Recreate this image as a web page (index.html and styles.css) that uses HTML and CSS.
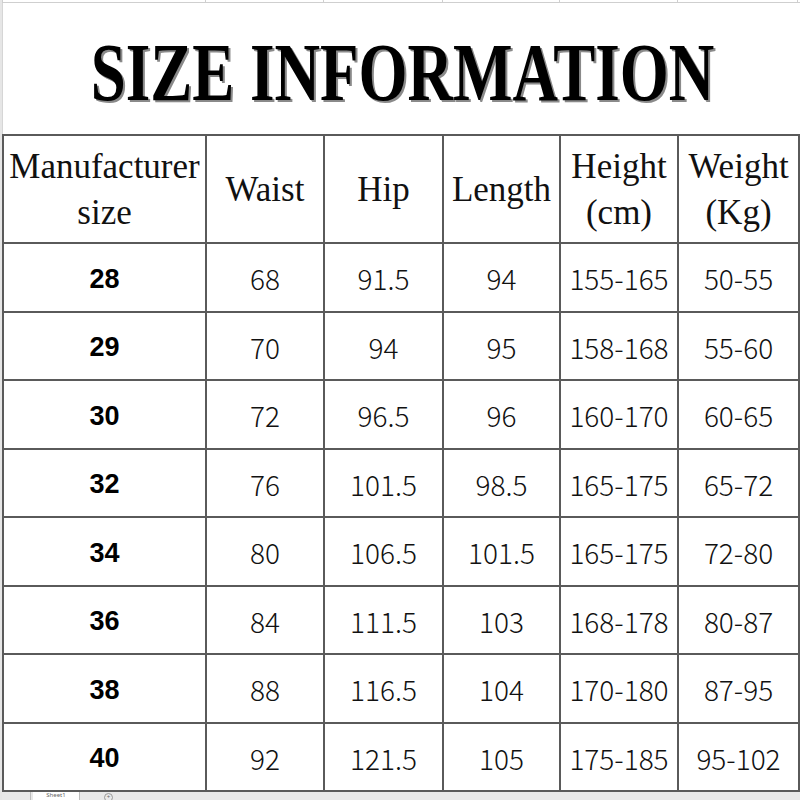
FILE: index.html
```html
<!DOCTYPE html>
<html>
<head>
<meta charset="utf-8">
<link rel="stylesheet" href="styles.css">
</head>
<body>
<div class="sheet">
  <div class="toprow">
    <span></span><span></span><span></span><span></span><span></span><span></span>
  </div>
  <div class="title"><span class="title-text">SIZE INFORMATION</span></div>
  <table class="size">
    <colgroup>
      <col class="c1"><col class="c2"><col class="c3"><col class="c4"><col class="c5"><col class="c6">
    </colgroup>
    <thead>
      <tr>
        <th>Manufacturer<br>size</th>
        <th>Waist</th>
        <th>Hip</th>
        <th>Length</th>
        <th>Height<br>(cm)</th>
        <th>Weight<br>(Kg)</th>
      </tr>
    </thead>
    <tbody>
      <tr><td class="mfr">28</td><td>68</td><td>91.5</td><td>94</td><td>155-165</td><td>50-55</td></tr>
      <tr><td class="mfr">29</td><td>70</td><td>94</td><td>95</td><td>158-168</td><td>55-60</td></tr>
      <tr><td class="mfr">30</td><td>72</td><td>96.5</td><td>96</td><td>160-170</td><td>60-65</td></tr>
      <tr><td class="mfr">32</td><td>76</td><td>101.5</td><td>98.5</td><td>165-175</td><td>65-72</td></tr>
      <tr><td class="mfr">34</td><td>80</td><td>106.5</td><td>101.5</td><td>165-175</td><td>72-80</td></tr>
      <tr><td class="mfr">36</td><td>84</td><td>111.5</td><td>103</td><td>168-178</td><td>80-87</td></tr>
      <tr><td class="mfr">38</td><td>88</td><td>116.5</td><td>104</td><td>170-180</td><td>87-95</td></tr>
      <tr><td class="mfr">40</td><td>92</td><td>121.5</td><td>105</td><td>175-185</td><td>95-102</td></tr>
    </tbody>
  </table>
  <div class="tabs">
    <span class="tab-nav"></span>
    <span class="tab">Sheet1</span>
    <span class="tab-add">+</span>
  </div>
</div>
</body>
</html>
```

FILE: styles.css
```css
html, body {
  margin: 0;
  padding: 0;
  background: #ffffff;
}

.sheet {
  width: 800px;
  height: 800px;
  overflow: hidden;
  position: relative;
  background: #ffffff;
  border-left: 2px solid #e6e6e6;
  box-sizing: border-box;
  display: flex;
  flex-direction: column;
}

.toprow {
  height: 3px;
  flex: none;
  display: grid;
  grid-template-columns: 203px 118px 119px 117px 118px 120px;
  border-bottom: 1px solid #cfcfcf;
  border-left: 1px solid #cfcfcf;
  box-sizing: border-box;
}

.toprow span {
  border-right: 1px solid #cfcfcf;
}

.title {
  height: 131px;
  flex: none;
  display: flex;
  align-items: center;
  justify-content: center;
  border-left: 1px solid #d6d6d6;
  padding-top: 8px;
  box-sizing: border-box;
}

.title-text {
  display: inline-block;
  font-family: "Liberation Serif", serif;
  font-weight: bold;
  font-size: 63px;
  line-height: 1;
  color: #000;
  transform: scaleY(1.32);
  text-shadow: 2px 2px 0 #8a8a8a;
  white-space: nowrap;
  margin-left: 2px;
}

.size {
  border-collapse: collapse;
  table-layout: fixed;
  width: 796px;
  flex: none;
}

.size col.c1 { width: 203px; }
.size col.c2 { width: 118px; }
.size col.c3 { width: 119px; }
.size col.c4 { width: 117px; }
.size col.c5 { width: 118px; }
.size col.c6 { width: 121px; }

.size th,
.size td {
  border: 2px solid #5a5a5a;
  padding: 0;
  text-align: center;
  vertical-align: middle;
}

.size th {
  height: 108px;
  font-family: "Liberation Serif", serif;
  font-weight: normal;
  font-size: 35px;
  line-height: 46px;
  color: #111;
  padding-top: 2px;
  box-sizing: border-box;
}

.size td {
  height: 64.5px;
  font-family: "Noto Sans CJK SC", "Noto Sans", sans-serif;
  font-weight: 300;
  font-size: 28px;
  color: #111;
  padding-top: 2px;
}

.size td.mfr {
  height: 62.5px;
  font-family: "Liberation Sans", Arial, sans-serif;
  font-weight: bold;
  font-size: 27px;
  color: #000;
  padding-top: 4px;
}

.tabs {
  flex: 1;
  background: #e8e8e8;
  display: flex;
  align-items: flex-start;
  font-family: "Noto Sans", sans-serif;
  font-size: 6px;
  line-height: 7px;
  color: #666;
}

.tab-nav {
  width: 28px;
  height: 8px;
  border-right: 1px solid #bdbdbd;
}

.tab {
  width: 46px;
  height: 8px;
  background: #ffffff;
  border-right: 1px solid #bdbdbd;
  margin-left: 2px;
  text-align: center;
}

.tab-add {
  margin-left: 24px;
  margin-top: 1px;
  width: 7px;
  height: 7px;
  line-height: 7px;
  border: 1px solid #999;
  border-radius: 50%;
  text-align: center;
  font-size: 6px;
}
```
